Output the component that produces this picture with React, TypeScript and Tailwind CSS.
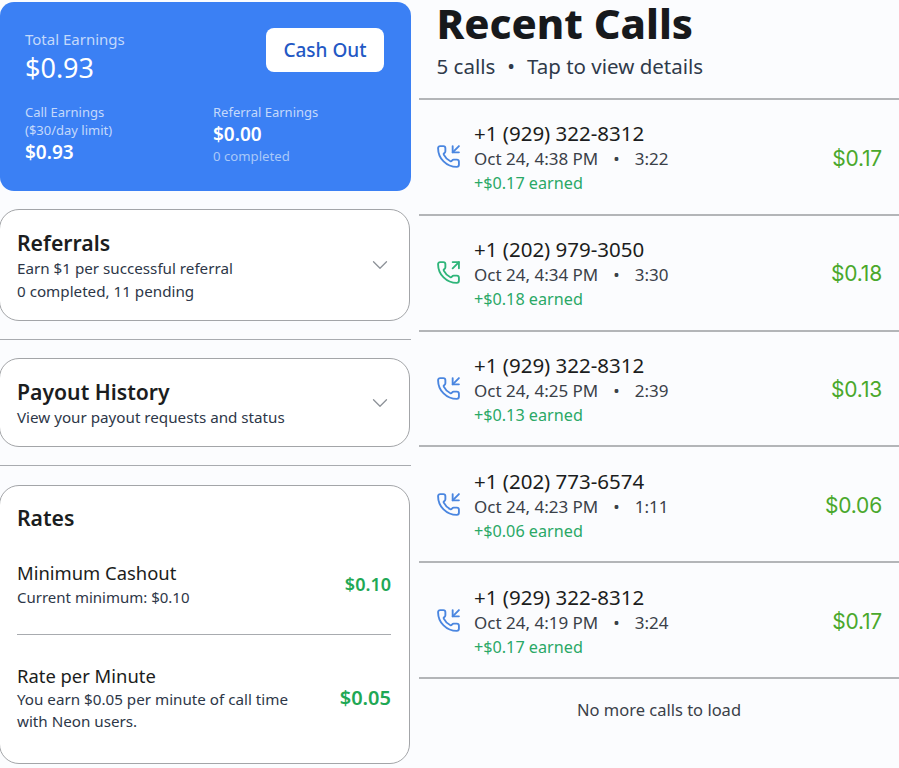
import { ChevronDown, PhoneIncoming, PhoneOutgoing } from "lucide-react";

const calls = [
  { phone: "+1 (929) 322-8312", time: "Oct 24, 4:38 PM", dur: "3:22", amt: "$0.17", out: false },
  { phone: "+1 (202) 979-3050", time: "Oct 24, 4:34 PM", dur: "3:30", amt: "$0.18", out: true },
  { phone: "+1 (929) 322-8312", time: "Oct 24, 4:25 PM", dur: "2:39", amt: "$0.13", out: false },
  { phone: "+1 (202) 773-6574", time: "Oct 24, 4:23 PM", dur: "1:11", amt: "$0.06", out: false },
  { phone: "+1 (929) 322-8312", time: "Oct 24, 4:19 PM", dur: "3:24", amt: "$0.17", out: false },
];

function Accordion({ title, lines, h }: { title: string; lines: string[]; h: string }) {
  return (
    <div className={`-ml-px flex w-[411px] items-center justify-between rounded-[20px] border border-[#a3a5a8] bg-white pl-[17px] pr-[16px] ${h}`}>
      <div className="pt-[1px]">
        <div className="text-[21.2px] font-semibold leading-[28px] text-[#1b1d20]">{title}</div>
        {lines.map((l) => (
          <div key={l} className="text-[15.2px] leading-[22.5px] text-[#2d3748]">{l}</div>
        ))}
      </div>
      <ChevronDown size={26} strokeWidth={1.2} className="text-[#8d9298]" />
    </div>
  );
}

export default function App() {
  return (
    <div className="flex h-[768px] w-[899px] overflow-hidden bg-[#fbfcfe] text-[#1b1d20] [font-family:'Noto_Sans',sans-serif]">
      <div className="flex w-[419px] shrink-0 flex-col pt-[2px]">
        <div className="h-[189px] w-[411px] rounded-[14px] bg-[#3b80f4] pl-[25px] pr-[27px] pt-[26px] text-white">
          <div className="flex items-start justify-between">
            <div>
              <div className="mt-[1px] text-[15px] leading-[20px] text-[#c4d9fb]">Total Earnings</div>
              <div className="mt-[1px] text-[27px] leading-[36px]">$0.93</div>
            </div>
            <div className="flex h-[44px] w-[118px] items-center justify-center rounded-[8px] bg-white text-[19px] font-medium text-[#2358c4]">Cash Out</div>
          </div>
          <div className="mt-[18px] flex">
            <div className="w-[188px]">
              <div className="text-[13px] leading-[17px] text-[#c4d9fb]">Call Earnings</div>
              <div className="text-[13px] leading-[18px] text-[#c4d9fb]">($30/day limit)</div>
              <div className="text-[19px] font-semibold leading-[26px]">$0.93</div>
            </div>
            <div>
              <div className="text-[13px] leading-[17px] text-[#c4d9fb]">Referral Earnings</div>
              <div className="text-[19px] font-semibold leading-[26px]">$0.00</div>
              <div className="text-[13.2px] leading-[18px] text-[#a9c8f9]">0 completed</div>
            </div>
          </div>
        </div>

        <div className="mt-[18px]">
          <Accordion title="Referrals" lines={["Earn $1 per successful referral", "0 completed, 11 pending"]} h="h-[112px]" />
        </div>
        <div className="mt-[18px] h-px w-[411px] bg-[#a8abaf]" />
        <div className="mt-[18px]">
          <Accordion title="Payout History" lines={["View your payout requests and status"]} h="h-[89px]" />
        </div>
        <div className="mt-[18px] h-px w-[411px] bg-[#a8abaf]" />

        <div className="-ml-px mt-[19px] h-[279px] w-[411px] rounded-[20px] border border-[#a3a5a8] bg-white pl-[17px] pr-[18px] pt-[18px]">
          <div className="text-[21.2px] font-semibold leading-[28px]">Rates</div>
          <div className="mt-[27px] flex h-[50px] items-center justify-between">
            <div>
              <div className="text-[18.4px] leading-[26px]">Minimum Cashout</div>
              <div className="text-[15px] leading-[22px] text-[#2d3748]">Current minimum: $0.10</div>
            </div>
            <div className="text-[18px] font-semibold text-[#1fa855]">$0.10</div>
          </div>
          <div className="mt-[25px] h-px bg-[#a8abaf]" />
          <div className="mt-[28px] flex items-center justify-between">
            <div>
              <div className="text-[18.4px] leading-[25px]">Rate per Minute</div>
              <div className="w-[290px] text-[15.2px] leading-[22px] text-[#2d3748]">You earn $0.05 per minute of call time with Neon users.</div>
            </div>
            <div className="text-[20px] font-semibold text-[#1fa855]">$0.05</div>
          </div>
        </div>
      </div>

      <div className="flex min-w-0 flex-1 flex-col">
        <div className="h-[98px] pl-[17.5px]">
          <div className="pt-[3px] text-[41.7px] font-extrabold leading-[40px] text-[#17191c]">Recent Calls</div>
          <div className="mt-[10px] flex gap-[12px] text-[20.5px] leading-[26px] text-[#2f3a4a]">
            <span>5 calls</span><span>•</span><span>Tap to view details</span>
          </div>
        </div>
        {calls.map((c) => (
          <div key={c.time} className="flex h-[115.8px] items-center justify-between border-t-2 border-[#b3b5b8] pl-[17px] pr-[17px]">
            <div className="flex items-center">
              <div className="w-[38px]">
                {c.out ? (
                  <PhoneOutgoing size={25} strokeWidth={1.8} className="text-[#2fb57a]" />
                ) : (
                  <PhoneIncoming size={25} strokeWidth={1.8} className="text-[#4a86e0]" />
                )}
              </div>
              <div className="pt-[1px]">
                <div className="text-[20.5px] leading-[26px] text-[#1b1d20]">{c.phone}</div>
                <div className="flex gap-[15px] text-[17px] leading-[25px] text-[#3a4048]">
                  <span>{c.time}</span><span>•</span><span>{c.dur}</span>
                </div>
                <div className="mt-[1px] text-[16.2px] leading-[22px] text-[#2aa866]">+{c.amt} earned</div>
              </div>
            </div>
            <div className="pt-[3px] text-[21px] tracking-[-0.2px] text-[#4aa82c] [font-family:Inter,sans-serif]">{c.amt}</div>
          </div>
        ))}
        <div className="border-t-2 border-[#b3b5b8] pt-[19px] text-center text-[16.5px] leading-[24px] text-[#3a4048]">No more calls to load</div>
      </div>
    </div>
  );
}
